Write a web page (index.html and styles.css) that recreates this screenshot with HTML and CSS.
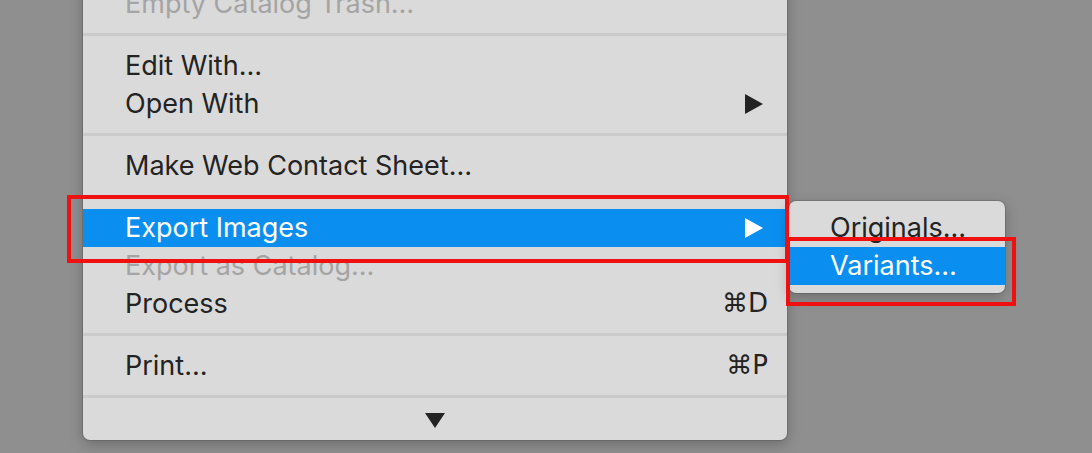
FILE: index.html
```html
<!DOCTYPE html>
<html>
<head>
    <title>Menu</title>
    <meta charset="utf-8">
    <link rel="stylesheet" href="styles.css">
</head>
<body>

    <div class="menu">
        <div class="item disabled"><span class="label">Empty Catalog Trash…</span></div>
        <div class="sep"></div>
        <div class="item"><span class="label">Edit With…</span></div>
        <div class="item"><span class="label">Open With</span>
            <svg class="arrow" width="18" height="20" viewBox="0 0 18 20"><polygon points="0,0 18,10 0,20"/></svg>
        </div>
        <div class="sep"></div>
        <div class="item"><span class="label">Make Web Contact Sheet…</span></div>
        <div class="sep"></div>
        <div class="item active"><span class="label">Export Images</span>
            <svg class="arrow" width="18" height="20" viewBox="0 0 18 20"><polygon points="0,0 18,10 0,20"/></svg>
            <div class="mark mark-main"></div>
            <div class="submenu">
                <div class="item"><span class="label">Originals…</span></div>
                <div class="item active"><span class="label">Variants…</span>
                    <div class="mark mark-sub"></div>
                </div>
            </div>
        </div>
        <div class="item disabled"><span class="label">Export as Catalog…</span></div>
        <div class="item"><span class="label">Process</span><span class="key">⌘D</span></div>
        <div class="sep"></div>
        <div class="item"><span class="label">Print…</span><span class="key">⌘P</span></div>
        <div class="sep"></div>
        <div class="more">
            <svg width="20" height="15" viewBox="0 0 20 15"><polygon points="0,0 20,0 10,15"/></svg>
        </div>
    </div>

</body>
</html>
```

FILE: styles.css
```css
html, body {
    height: 100%;
}

body {
    margin: 0;
    background-color: #8f8f8f;
    font-family: Inter, "Noto Sans", "DejaVu Sans", sans-serif;
    overflow: hidden;
}

.menu {
    width: 704px;
    margin: -23px 0 0 83px;
    padding: 8px 0;
    background-color: #dadada;
    border-radius: 0 0 7px 7px;
    box-shadow: 0 0 0 1px rgba(0,0,0,0.12), 0 4px 14px rgba(0,0,0,0.25);
    display: flex;
    flex-direction: column;
}

.item {
    position: relative;
    height: 38px;
    display: flex;
    align-items: center;
    padding: 0 19px 0 42px;
    color: #232323;
    font-size: 27px;
}

.item .label {
    flex: 1;
    margin-top: -2px;
}

.item.disabled {
    color: #a4a4a4;
}

.item.active {
    background-color: #0a8ff0;
    color: #ffffff;
}

.arrow {
    fill: #232323;
    margin-right: 5px;
}

.active > .arrow {
    fill: #ffffff;
}

.key {
    font-family: "DejaVu Sans", Inter, sans-serif;
    font-size: 26px;
    margin-top: -2px;
}

.sep {
    height: 3px;
    margin: 10px 0 11px;
    background-color: #cacaca;
}

.more {
    height: 23px;
    display: flex;
    justify-content: center;
    align-items: center;
    fill: #232323;
}

/* submenu next to Export Images */
.submenu {
    position: absolute;
    left: 706px;
    top: -8px;
    width: 216px;
    padding: 8px 0;
    background-color: #dadada;
    border-radius: 7px;
    box-shadow: 0 0 0 1px rgba(0,0,0,0.12), 0 4px 14px rgba(0,0,0,0.25);
}

.submenu .item {
    padding-left: 41px;
}

/* red annotation boxes */
.mark {
    position: absolute;
    border: 4px solid #f01010;
    z-index: 2;
}

.mark-main {
    left: -16px;
    top: -14px;
    width: 714px;
    height: 60px;
}

.mark-sub {
    left: -3px;
    top: -10px;
    width: 222px;
    height: 61px;
}
```
